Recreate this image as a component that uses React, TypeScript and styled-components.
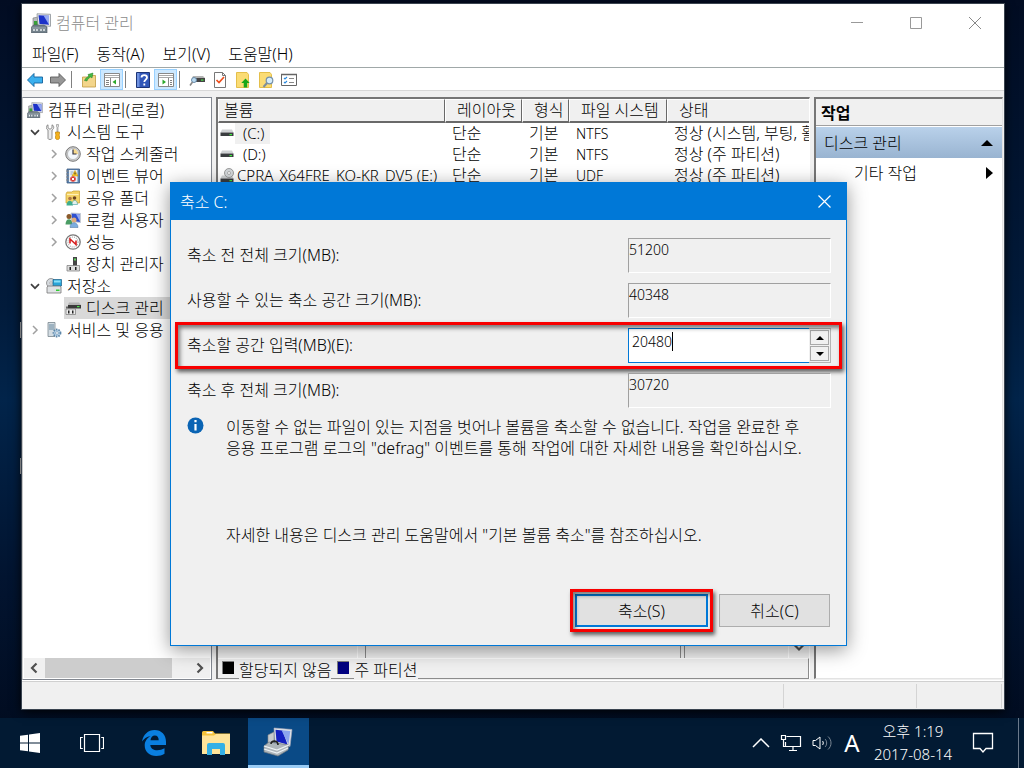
import React from 'react';
import styled, { createGlobalStyle, css } from 'styled-components';

const GlobalStyle = createGlobalStyle`
  *, *::before, *::after { box-sizing: border-box; }
  html, body { margin: 0; padding: 0; }
  body {
    font-family: "Noto Sans", "Noto Sans CJK KR", sans-serif;
    font-size: 16px;
    font-weight: 300;
    line-height: 22px;
    color: #000;
  }
  button, input { font: inherit; color: inherit; margin: 0; }
  button { padding: 0; border: 0; background: none; }
  svg { display: block; flex: none; }
`;

/* ---------- desktop ---------- */

const Desktop = styled.div`
  display: flex;
  flex-direction: column;
  min-height: 100vh;
  overflow: hidden;
  background:
    linear-gradient(#c9ccd0, #c9ccd0) 20px 322px / 2px 16px no-repeat,
    linear-gradient(#c9ccd0, #c9ccd0) 20px 458px / 2px 16px no-repeat,
    linear-gradient(180deg, #020c22 0%, #021b3b 40%, #02244a 52%, #021430 75%, #010a1c 100%);
`;

const Workspace = styled.main`
  flex: 1;
  display: flex;
  padding: 4px 20px 9px 22px;
`;

const Window = styled.section`
  position: relative;
  flex: 1;
  min-width: 0;
  display: flex;
  flex-direction: column;
  background: #f0f0f0;
  box-shadow: 0 0 0 1px #3a4450, 0 2px 10px #000;
`;

const TitleBar = styled.header`
  display: flex;
  align-items: center;
  height: 37px;
  padding-left: 9px;
  background: #fff;
`;

const WindowTitle = styled.h1`
  flex: 1;
  margin: 0 0 0 5px;
  font-size: 16px;
  font-weight: 300;
  line-height: 20px;
  color: #8c8c8c;
`;

const CaptionButton = styled.button`
  display: flex;
  align-items: center;
  justify-content: center;
  width: 59px;
  height: 36px;
`;

const MenuBar = styled.nav`
  display: flex;
  gap: 18px;
  height: 27px;
  padding: 0 10px;
  background: #fff;
  border-bottom: 1px solid #a0a8a8;
`;

const MenuItem = styled.button`
  line-height: 20px;
  white-space: nowrap;
`;

const Toolbar = styled.div`
  display: flex;
  align-items: center;
  height: 23px;
  padding: 1px 0 0 1px;
  background: #fff;
  border-bottom: 1px solid #d8d8d8;
`;

const ToolButton = styled.button<{ $on?: boolean }>`
  display: flex;
  align-items: center;
  justify-content: center;
  width: 23px;
  height: 21px;
  ${p => p.$on && css`
    background: #cce8ff;
    border: 1px solid #99d1ff;
  `}
`;

const ToolSeparator = styled.span`
  width: 1px;
  height: 17px;
  margin: 0 5px 0 2px;
  background: #808080;
`;

const Panes = styled.div`
  flex: 1;
  display: flex;
  gap: 4px;
  min-height: 0;
  padding: 6px 1px 0 0;
`;

/* ---------- tree ---------- */

const TreePane = styled.aside`
  width: 190px;
  display: flex;
  flex-direction: column;
  margin-bottom: 1px;
  background: #fff;
  border: 1px solid #828790;
  border-left-color: #c8c8c8;
`;

const TreeList = styled.ul`
  flex: 1;
  margin: 0;
  padding: 1px 0 0;
  list-style: none;
  overflow: hidden;
`;

const TreeRow = styled.li<{ $level: number }>`
  display: flex;
  align-items: center;
  height: 22px;
  padding-left: ${p => [4, 7, 26][p.$level]}px;
  white-space: nowrap;
`;

const Twisty = styled.span`
  display: flex;
  justify-content: center;
  width: 10px;
  margin-right: 5px;
`;

const TreeLabel = styled.span<{ $selected?: boolean; $root?: boolean }>`
  display: flex;
  align-items: center;
  gap: 5px;
  height: 22px;
  padding-left: ${p => (p.$root ? 0 : 1)}px;
  ${p => p.$selected && css`
    flex: 1;
    background: #d9d9d9;
  `}
`;

const HScroll = styled.div`
  display: flex;
  height: 20px;
  margin: 0 1px 1px;
  background: #f0f0f0;
`;

const ScrollButton = styled.button`
  display: flex;
  align-items: center;
  justify-content: center;
  width: 21px;
`;

const ScrollTrack = styled.div`
  flex: 1;
`;

const ScrollThumb = styled.div`
  width: 88%;
  height: 100%;
  background: #cdcdcd;
`;

/* ---------- volume list ---------- */

const CenterPane = styled.section`
  flex: 1;
  min-width: 0;
  display: flex;
  flex-direction: column;
  margin-bottom: 2px;
  border-top: 2px solid #767676;
  border-left: 2px solid #767676;
  border-right: 1px solid #fff;
`;

const ListArea = styled.div`
  height: 220px;
  overflow: hidden;
  background: #fff;
`;

const VolumeTable = styled.table`
  width: 100%;
  border-collapse: separate;
  border-spacing: 0;
  table-layout: fixed;
`;

const Th = styled.th`
  height: 24px;
  padding: 0 0 0 11px;
  font-weight: 300;
  text-align: left;
  line-height: 21px;
  white-space: nowrap;
  overflow: hidden;
  background: #f0f0f0;
  border-top: 1px solid #fff;
  border-left: 1px solid #fff;
  border-right: 1px solid #696969;
  border-bottom: 2px solid #696969;
  &:first-child { padding-left: 5px; }
  &:last-child { border-right: 0; }
`;

const Td = styled.td<{ $latin?: boolean }>`
  height: 21px;
  padding: 0 0 0 7px;
  font-size: ${p => (p.$latin ? 14 : 16)}px;
  line-height: 21px;
  white-space: nowrap;
  overflow: hidden;
  &:first-child { padding-left: 2px; }
`;

const VolumeName = styled.span`
  display: flex;
  align-items: center;
  gap: 1px;
  height: 21px;
`;

const VolumeText = styled.span<{ $indent?: boolean; $selected?: boolean }>`
  height: 21px;
  padding: 0 6px 0 ${p => (p.$indent ? 8 : 2)}px;
  font-size: 15px;
  background: ${p => (p.$selected ? '#f0f0f0' : 'transparent')};
`;

const DiskMap = styled.div`
  flex: 1;
  display: grid;
  grid-template-columns: 147px 1fr 107px 21px;
  background: #f0f0f0;
`;

const MapHeader = styled.div`
  margin-right: 7px;
  border-right: 1px solid #fff;
`;

const MapRegion = styled.div`
  border: 1px solid #8c8c8c;
  border-width: 0 1px;
`;

const MapTail = styled.div`
  margin-left: 3px;
  border-left: 1px solid #8c8c8c;
`;

const MapScroll = styled.div`
  display: flex;
  align-items: flex-end;
  justify-content: center;
  padding-bottom: 3px;
  border-left: 1px solid #fff;
`;

const Legend = styled.div`
  display: flex;
  align-items: center;
  height: 21px;
  padding-left: 4px;
  border-top: 1px solid #fff;
  border-right: 1px solid #8c8c8c;
  border-bottom: 1px solid #8c8c8c;
`;

const LegendSwatch = styled.span<{ $color: string }>`
  width: 12px;
  height: 13px;
  margin: 0 5px 3px 0;
  background: ${p => p.$color};
  border: 1px solid #808080;
  border-width: 1px 0 0 1px;
`;

const LegendText = styled.span`
  height: 20px;
  margin: 0 6px -2px 0;
  line-height: 21px;
  background: #f0f0f0;
`;

/* ---------- actions ---------- */

const ActionsPane = styled.aside`
  width: 189px;
  display: flex;
  flex-direction: column;
  margin-bottom: 2px;
  background: #fff;
  border-top: 2px solid #767676;
  border-left: 2px solid #767676;
  border-right: 1px solid #e3e3e3;
  border-bottom: 1px solid #e3e3e3;
`;

const ActionsTitle = styled.h2`
  height: 27px;
  margin: 0 0 1px;
  padding-left: 5px;
  font-size: 16px;
  font-weight: 700;
  line-height: 28px;
  background: #f0f0f0;
  border-bottom: 1px solid #a0a0a0;
`;

const ActionsGroup = styled.button`
  display: flex;
  align-items: center;
  justify-content: space-between;
  height: 31px;
  padding: 0 9px 0 8px;
  background: linear-gradient(#b9d1ea, #99b4d1);
`;

const ActionsItem = styled.button`
  display: flex;
  align-items: center;
  justify-content: space-between;
  height: 30px;
  padding: 0 9px 0 38px;
`;

const StatusBar = styled.footer`
  display: grid;
  grid-template-columns: 1fr 133px 85px;
  height: 28px;
  padding: 2px 2px 1px 0;
  border-top: 1px solid #d0d0d0;
  box-shadow: 0 -1px 0 #fff;
`;

const StatusCell = styled.div`
  border-right: 1px solid #d4d4d4;
`;

/* ---------- shrink dialog ---------- */

const Dialog = styled.form`
  position: absolute;
  left: 148px;
  top: 178px;
  width: 677px;
  display: flex;
  flex-direction: column;
  background: #f0f0f0;
  border: 1px solid #0078d7;
  box-shadow: 0 4px 18px rgba(0, 0, 0, 0.42);
`;

const DialogTitle = styled.header`
  display: flex;
  align-items: center;
  justify-content: space-between;
  height: 37px;
  padding: 0 9px;
  color: #fff;
  background: #0078d7;
`;

const DialogClose = styled.button`
  display: flex;
  align-items: center;
  justify-content: center;
  width: 25px;
  height: 25px;
`;

const Fields = styled.div`
  display: flex;
  flex-direction: column;
  gap: 10px;
  padding: 18px 15px 0 16px;
`;

const Field = styled.div`
  position: relative;
  display: flex;
  justify-content: space-between;
  height: 35px;
  line-height: 35px;
`;

const ReadOnlyBox = styled.input`
  width: 203px;
  height: 35px;
  padding: 0 0 13px;
  font-size: 14px;
  background: #f0f0f0;
  border: 1px solid;
  border-color: #a0a0a0 #fff #fff #a0a0a0;
  outline: 0;
`;

const Spinner = styled.div`
  position: relative;
  display: flex;
  width: 203px;
  height: 35px;
`;

const SpinInput = styled.input`
  flex: 1;
  min-width: 0;
  padding: 0 0 9px 3px;
  font-size: 14px;
  background: #fff;
  border: 1px solid #0078d7;
  border-right: 0;
  outline: 0;
`;

const Caret = styled.span`
  position: absolute;
  left: 44px;
  top: 4px;
  width: 1px;
  height: 19px;
  background: #000;
`;

const SpinButtons = styled.div`
  display: flex;
  flex-direction: column;
  gap: 1px;
  width: 22px;
  padding: 1px;
  border: 1px solid #b4b4b4;
  border-left: 0;
`;

const SpinButton = styled.button`
  flex: 1;
  display: flex;
  align-items: center;
  justify-content: center;
  background: #f0f0f0;
  border: 1px solid #a8a8a8;
`;

const Highlight = styled.span<{ $inset: string }>`
  position: absolute;
  inset: ${p => p.$inset};
  border: 3px solid #f80000;
  box-shadow: 2px 3px 4px rgba(0, 0, 0, 0.6), inset 2px 3px 4px rgba(0, 0, 0, 0.5);
  pointer-events: none;
`;

const Notice = styled.div`
  display: flex;
  gap: 22px;
  padding: 9px 15px 0 16px;
`;

const NoticeText = styled.div`
  flex: 1;
  line-height: 21px;
  p { margin: 0 0 66px; white-space: nowrap; }
  p:last-child { margin-bottom: 0; }
`;

const DialogActions = styled.div`
  display: flex;
  justify-content: flex-end;
  gap: 11px;
  padding: 48px 16px 18px;
`;

const ActionSlot = styled.span`
  position: relative;
  display: flex;
`;

const PushButton = styled.button<{ $primary?: boolean }>`
  width: ${p => (p.$primary ? 133 : 111)}px;
  height: 33px;
  line-height: 28px;
  background: #e1e1e1;
  border: ${p => (p.$primary ? '2px solid #0078d7' : '1px solid #adadad')};
`;

/* ---------- taskbar ---------- */

const Taskbar = styled.footer`
  display: flex;
  height: 50px;
  background: #021a33;
  color: #fff;
`;

const TaskButton = styled.button<{ $active?: boolean }>`
  display: flex;
  align-items: center;
  justify-content: center;
  width: 61px;
  margin-right: 1px;
  padding-right: 2px;
  ${p => p.$active && css`
    background: #0a4a86;
    border-bottom: 3px solid #9accf5;
  `}
`;

const Tray = styled.div`
  display: flex;
  align-items: center;
  margin-left: auto;
  gap: 10px;
`;

const TrayButton = styled.button`
  display: flex;
  align-items: center;
  justify-content: center;
`;

const ImeButton = styled(TrayButton)`
  width: 20px;
  font-size: 24px;
  font-weight: 400;
  line-height: 24px;
`;

const Clock = styled.time`
  width: 82px;
  margin-right: 8px;
  font-size: 15px;
  line-height: 23px;
  text-align: center;
  white-space: nowrap;
`;

const ShowDesktop = styled.button`
  width: 6px;
  height: 50px;
  margin-left: 14px;
  border-left: 1px solid #6b7a8c;
`;

/* ---------- icons ---------- */

const ComputerIcon = ({ size = 16 }: { size?: number }) => (
  <svg width={size} height={size} viewBox="0 0 20 20">
    <path d="M2 5l5-1v9H2z" fill="#b8bcc0" stroke="#777" strokeWidth=".6" />
    <path d="M3 8h4v4H3z" fill="#38a038" />
    <path d="M6 .8l13.500.5v12L7 12.500z" fill="#e8eaec" stroke="#8a9096" strokeWidth=".8" />
    <path d="M7.500 2.300l10.500.4v9L8.500 11z" fill="#1c32c8" />
    <path d="M12.500 2.500l5.500.2v9z" fill="#96aaf2" />
    <path d="M.5 14l2-2H13l3 2v6H.5z" fill="#74828c" stroke="#4c565e" strokeWidth=".6" />
    <path d="M1 15h14" stroke="#a9b5bc" strokeWidth=".8" />
    <path d="M3 16v2M6 16v2M10 16v2M13 16v2" stroke="#f0f4f6" strokeWidth="1.400" />
  </svg>
);

const ToolsIcon = () => (
  <svg width="16" height="16" viewBox="0 0 16 16">
    <path d="M2 .8v3l2 1.500 2-1.500v-3c2.300 1 2.300 4 0 5.200v8.500c0 1.300-4 1.300-4 0V6C-.3 4.800-.3 1.800 2 .8z" fill="#ececec" stroke="#777" strokeWidth=".8" />
    <path d="M10.500.5h2v2l-.5 1v4.500h-1V3.500l-.5-1z" fill="#ddd" stroke="#888" strokeWidth=".6" />
    <path d="M9.500 8h4v2l-.5 1 .5 1v2c0 2-4 2-4 0v-2l.5-1-.5-1z" fill="#f6b21c" stroke="#b47800" strokeWidth=".6" />
  </svg>
);

const ClockIcon = () => (
  <svg width="16" height="16" viewBox="0 0 16 16">
    <circle cx="8" cy="8" r="7.300" fill="#cfcfcf" stroke="#777" />
    <circle cx="8" cy="8" r="5.500" fill="#f4f8fc" stroke="#999" strokeWidth=".5" />
    <path d="M8 8V3a5 5 0 0 1 5 5z" fill="#f6d98c" />
    <path d="M8 3.500V8h3.500" fill="none" stroke="#334" strokeWidth="1.200" />
  </svg>
);

const EventIcon = () => (
  <svg width="16" height="16" viewBox="0 0 16 16">
    <path d="M2 1h12.500v14H2z" fill="#5e86b4" stroke="#3d5a80" strokeWidth=".8" />
    <path d="M4 2h8.500v12H4z" fill="#e9eff6" />
    <path d="M1 3h3M1 6h3M1 9h3M1 12h3" stroke="#888" />
    <path d="M5.500 4h3M5.500 6h2" stroke="#8fa6c4" />
    <path d="M10 2.500l3 5.500H7z" fill="#ffce2e" stroke="#b98b00" strokeWidth=".5" />
    <path d="M10 4.500v2" stroke="#222" />
    <circle cx="8" cy="11" r="2.800" fill="#d83a34" />
    <path d="M6.800 9.800l2.400 2.400M9.200 9.800l-2.400 2.400" stroke="#fff" />
  </svg>
);

const SharedFolderIcon = () => (
  <svg width="16" height="16" viewBox="0 0 16 16">
    <path d="M1 4l1-2h5l1-1h6.500v12H1z" fill="#f5d368" stroke="#c79d2c" strokeWidth=".7" />
    <path d="M2 4.500h11.500" stroke="#fff0b8" />
    <circle cx="5" cy="8.500" r="1.800" fill="#b07848" />
    <circle cx="9.500" cy="8" r="1.800" fill="#6b4423" />
    <path d="M1.500 15.500c0-6.500 6.500-6.500 6.500 0z" fill="#3fae8e" />
    <path d="M7 14.500c0-5.500 5.500-5.500 5.500 0z" fill="#e4f0ee" stroke="#3f9f9e" strokeWidth=".6" />
  </svg>
);

const UsersIcon = () => (
  <svg width="16" height="16" viewBox="0 0 16 16">
    <path d="M6 1l9.500.5v9L7 9.500z" fill="#2e50d0" stroke="#c7ccd4" />
    <path d="M11 2l4 .2v7.500z" fill="#93a8f0" />
    <circle cx="4" cy="4.500" r="2.500" fill="#8b5a2b" />
    <path d="M.5 12.500c0-7 7-7 7 0z" fill="#4a9c64" />
    <circle cx="9" cy="8" r="2.500" fill="#e0ac7c" />
    <path d="M5 15.500c0-6.500 8-6.500 8 0z" fill="#7daee0" stroke="#48709c" strokeWidth=".5" />
  </svg>
);

const PerfIcon = () => (
  <svg width="16" height="16" viewBox="0 0 16 16">
    <circle cx="8" cy="8" r="7.200" fill="#fff" stroke="#777" strokeWidth="1.300" />
    <circle cx="8" cy="8" r="5" fill="none" stroke="#aaa" strokeWidth="1.200" strokeDasharray="1 1" />
    <path d="M5 9.500V5l6 5.500V6.500" fill="none" stroke="#d81e1e" strokeWidth="1.600" />
  </svg>
);

const DeviceIcon = () => (
  <svg width="16" height="16" viewBox="0 0 16 16">
    <path d="M8 1h4v9H8z" fill="#444" />
    <path d="M9 2.500h2v2H9z" fill="#5fd35f" />
    <path d="M2 9.500h12.500v5.500H2z" fill="#dcdcdc" stroke="#777" strokeWidth=".7" />
    <path d="M4.500 11H6v3H4.500zM10 11h1.500v3H10z" fill="#222" />
  </svg>
);

const StorageIcon = () => (
  <svg width="16" height="16" viewBox="0 0 16 16">
    <circle cx="5" cy="5" r="4.500" fill="#d6dade" stroke="#777" strokeWidth=".7" />
    <circle cx="5" cy="5" r="1.200" fill="#fff" stroke="#777" strokeWidth=".5" />
    <path d="M7 1.500h8.500v6.500H7z" fill="#28a4d8" stroke="#1a5f86" strokeWidth=".7" />
    <path d="M8 2.500h6.500v2H8z" fill="#8be0f8" />
    <path d="M1 9l1-1h12l1 1v6H1z" fill="#dfe2e4" stroke="#777" strokeWidth=".8" />
    <path d="M10 11.500h3.500v1.500H10z" fill="#3c3" />
  </svg>
);

const DiskMgmtIcon = () => (
  <svg width="16" height="16" viewBox="0 0 16 16">
    <path d="M4 2.500h10l2 2.500H3z" fill="#b4b4b4" />
    <path d="M3 5h13v3.500H3z" fill="#3a3a3a" />
    <path d="M12 6h2.500v1.200H12z" fill="#4de04d" />
    <path d="M1 6.500h2v2H1z" fill="#666" />
    <path d="M1 9h9.500v5.500H1z" fill="#ececec" stroke="#777" strokeWidth=".7" />
    <path d="M3 10.500h1.500v3H3zM7 10.500h1.500v3H7z" fill="#222" />
  </svg>
);

const ServicesIcon = () => (
  <svg width="16" height="16" viewBox="0 0 16 16">
    <path d="M2 .5h7v14H2z" fill="#d3dce2" stroke="#78868f" strokeWidth=".8" />
    <path d="M3 3h5M3 5h5M3 7h5" stroke="#5b7f98" strokeWidth=".9" />
    <circle cx="11" cy="11" r="3.500" fill="#b8d4ea" stroke="#5c86a8" strokeWidth="1.800" strokeDasharray="1.500 1" />
    <circle cx="11" cy="11" r="1.400" fill="#fff" stroke="#5c86a8" strokeWidth=".6" />
  </svg>
);

const Chevron = ({ dir }: { dir: 'right' | 'down' }) => (
  <svg width="10" height="10" viewBox="0 0 10 10" fill="none">
    {dir === 'right'
      ? <path d="M3 1l4 4-4 4" stroke="#a0a0a0" strokeWidth="1.500" />
      : <path d="M1 3.200l4 4 4-4" stroke="#404040" strokeWidth="1.700" />}
  </svg>
);

const ScrollArrow = ({ d }: { d: string }) => (
  <svg width="12" height="12" viewBox="0 0 12 12" fill="none">
    <path d={d} stroke="#505050" strokeWidth="2.200" />
  </svg>
);

const Arrow = ({ flip }: { flip?: boolean }) => (
  <svg width="16" height="16" viewBox="0 0 16 16">
    {flip
      ? <path d="M15.500 8L9 1.500V5H.5v6H9v3.500z" fill="#979797" stroke="#5c5c5c" strokeWidth=".9" />
      : <path d="M.5 8L7 1.500V5h8.500v6H7v3.500z" fill="#3bb0ee" stroke="#14629c" strokeWidth=".9" />}
  </svg>
);

const FolderUpIcon = () => (
  <svg width="16" height="16" viewBox="0 0 16 16">
    <path d="M1.500 5H7l1-1.500h6.500V15h-13z" fill="#f3d58a" stroke="#c09a40" strokeWidth=".8" />
    <path d="M3.500 8.500C4.500 6 6 5 8 4.500L7 2.500 12 1l-1 5-1.300-1C8 6 6.500 7 6 9z" fill="#43b843" stroke="#237a23" strokeWidth=".5" />
  </svg>
);

const PaneIcon = ({ right }: { right?: boolean }) => (
  <svg width="16" height="14" viewBox="0 0 16 14">
    <path d="M.5.5h15v13H.5z" fill="#fff" stroke="#888" />
    <path d="M1 2.500h14M1 4.500h14" stroke="#a8a8a8" />
    <path d={right ? 'M10.500 5v8' : 'M6.500 5v8'} stroke="#888" />
    <path d={right ? 'M12 7.500h2M12 9.500h2M12 11.500h2' : 'M2 7.500h3M2 9.500h3M2 11.500h3'} stroke="#808080" />
    <path d={right ? 'M4.500 6.500L8 9l-3.500 2.500z' : 'M12 6.500L8.500 9l3.500 2.500z'} fill="#2ca82c" />
  </svg>
);

const HelpIcon = () => (
  <svg width="14" height="16" viewBox="0 0 14 16">
    <path d="M.5.5h13v15H.5z" fill="#3157b8" stroke="#1d3577" />
    <path d="M1 1h2.500v14H1z" fill="#6f92e0" />
    <path d="M5.500 5.500c0-3.200 5.500-3.200 5.500 0 0 2-2.700 2.200-2.700 4.500M8.300 11.500v2" fill="none" stroke="#fff" strokeWidth="1.800" />
  </svg>
);

const ConnectIcon = () => (
  <svg width="16" height="16" viewBox="0 0 16 16">
    <path d="M4 4h10l2 2H3z" fill="#b4b4b4" />
    <path d="M3 6h13v4H3z" fill="#444" />
    <path d="M12 7.500h2.500v1.200H12z" fill="#4de04d" />
    <circle cx="5" cy="8" r="2.500" fill="#bcdcf2" stroke="#6a8cab" />
    <path d="M3.500 10L1 13.500" stroke="#888" strokeWidth="1.600" />
  </svg>
);

const CheckDocIcon = () => (
  <svg width="14" height="16" viewBox="0 0 14 16">
    <path d="M1.500.5h8l3 3v12h-11z" fill="#fff" stroke="#777" />
    <path d="M9.500.5v3h3" fill="none" stroke="#777" />
    <path d="M3.500 8l2.500 2.500 5-5.500" fill="none" stroke="#ee4e1c" strokeWidth="1.700" />
  </svg>
);

const NoteUpIcon = () => (
  <svg width="14" height="16" viewBox="0 0 14 16">
    <path d="M.5.5h10.500l1.500 2v13H.5z" fill="#fbdc74" stroke="#e4bf4a" />
    <path d="M9.500 6.500l4.200 4.500h-2.500v4.500H7.700V11H5.300z" fill="#19a619" />
  </svg>
);

const NoteSearchIcon = () => (
  <svg width="16" height="16" viewBox="0 0 16 16">
    <path d="M1.500.5H12l1.500 2v13h-12z" fill="#fbdc74" stroke="#e4bf4a" />
    <circle cx="11.500" cy="8.500" r="3.300" fill="#d4ecfa" stroke="#7590a8" strokeWidth="1.200" />
    <path d="M9 11l-3.500 4" stroke="#7f8f9c" strokeWidth="2" />
  </svg>
);

const ListIcon = () => (
  <svg width="16" height="14" viewBox="0 0 16 14">
    <path d="M.5 1.500h15v11H.5z" fill="#fff" stroke="#666" />
    <path d="M0 1.500h16" stroke="#666" strokeWidth="1.500" />
    <path d="M3 5l1 1 2-2M3 9l1 1 2-2" fill="none" stroke="#2a8adf" strokeWidth="1.100" />
    <path d="M8 5.500h5M8 9.500h5" stroke="#888" />
  </svg>
);

const DriveIcon = ({ optical }: { optical?: boolean }) => (
  <svg width="14" height="16" viewBox="0 0 14 16">
    <g transform={optical ? 'translate(0 4)' : undefined}>
      <path d="M2 3.500h10l1.500 3H.5z" fill="#cfd2d4" />
      <path d="M.5 6.500h13v3.500H.5z" fill="#3a3d40" />
      <path d="M9.500 8h2.500v1.200H9.500z" fill="#3df03d" />
    </g>
    {optical && <circle cx="9" cy="5" r="4.500" fill="#d3d7da" stroke="#888" strokeWidth=".8" />}
    {optical && <circle cx="9" cy="5" r="1.500" fill="#fff" stroke="#888" strokeWidth=".6" />}
  </svg>
);

const Triangle = ({ d, w, h }: { d: string; w: number; h: number }) => (
  <svg width={w} height={h} viewBox={`0 0 ${w} ${h}`}><path d={d} fill="#000" /></svg>
);

const InfoIcon = () => (
  <svg width="17" height="17" viewBox="0 0 17 17">
    <circle cx="8.500" cy="8.500" r="8" fill="#0a64b4" />
    <path d="M8.500 3v2.200M8.500 7v6.500" stroke="#fff" strokeWidth="2.200" />
  </svg>
);

const StartIcon = () => (
  <svg width="20" height="20" viewBox="0 0 20 20" fill="#fff">
    <path d="M0 2.800L8 1.700v7.800H0zM9 1.500L20 0v9.500H9zM0 10.500h8v7.800l-8-1.100zM9 10.500h11V20L9 18.500z" />
  </svg>
);

const TaskViewIcon = () => (
  <svg width="24" height="18" viewBox="0 0 24 18" fill="none" stroke="#fff">
    <path d="M4.500.5h15v17h-15zM2.800 3.500H.5v11h2.300M21.200 3.500h2.300v11h-2.300" strokeWidth="1.200" />
  </svg>
);

const EdgeIcon = () => (
  <svg width="24" height="26" viewBox="0 0 24 26">
    <path
      d="M0 11.500C1.300 4.500 6 0 12.500 0 19.500 0 24 4.800 24 11.800v3.100H8.300c.3 3.500 3.300 5.300 7 5.300 2.700 0 5-.7 7.200-2v5.600C20.200 25.200 17.400 26 14.300 26 7.400 26 2.700 21.800 2.700 15.500c0-4.200 2.300-7.700 6-9.600C4.600 6.500 1.700 8.800 0 11.500zM8.500 10.300h8.200c0-3-1.400-4.800-3.800-4.800-2.500 0-4 2-4.400 4.800z"
      fill="#0a7fe0"
      fillRule="evenodd"
    />
  </svg>
);

const ExplorerIcon = () => (
  <svg width="28" height="24" viewBox="0 0 28 24">
    <path d="M0 1.500A1.500 1.500 0 0 1 1.500 0H11l2 2.500h15V23H0z" fill="#f5c33b" />
    <path d="M4.500 1h6v1.500h-6z" fill="#fff" />
    <path d="M0 4.500h12l2-1.500h14v20H0z" fill="#ffe49a" />
    <path d="M5 24V14a2 2 0 0 1 2-2h14a2 2 0 0 1 2 2v10h-5v-6h-8v6z" fill="#35b0e6" />
  </svg>
);

const ManagementIcon = () => (
  <svg width="30" height="30" viewBox="0 0 30 30">
    <path d="M5 8l6-3v12H5z" fill="#c7cbce" stroke="#888" strokeWidth=".6" />
    <path d="M11 1l18 1.500-2 17-15-4z" fill="#dfe3e6" stroke="#aab" strokeWidth=".6" />
    <path d="M12.500 2.800l7 .6 5 14.200-11-3z" fill="#1420c0" />
    <path d="M18.500 3.300l8.800.8-1.800 13.500z" fill="#8ba4ee" />
    <path d="M1 19l5-4 20 3-1 5-10 6-14-4z" fill="#aeb6bb" stroke="#70797f" strokeWidth=".7" />
    <path d="M1 19l13 4 12-5M1 22l13 4 11-5" fill="none" stroke="#edf2f4" strokeWidth="1.200" />
    <path d="M8 17c0-4 7-4 7 1" fill="none" stroke="#222" strokeWidth="1.600" />
  </svg>
);

/* ---------- data ---------- */

type TreeNode = {
  level: number;
  label: string;
  icon: React.ReactNode;
  state?: 'right' | 'down';
  selected?: boolean;
};

const tree: TreeNode[] = [
  { level: 0, label: '컴퓨터 관리(로컬)', icon: <ComputerIcon /> },
  { level: 1, label: '시스템 도구', icon: <ToolsIcon />, state: 'down' },
  { level: 2, label: '작업 스케줄러', icon: <ClockIcon />, state: 'right' },
  { level: 2, label: '이벤트 뷰어', icon: <EventIcon />, state: 'right' },
  { level: 2, label: '공유 폴더', icon: <SharedFolderIcon />, state: 'right' },
  { level: 2, label: '로컬 사용자', icon: <UsersIcon />, state: 'right' },
  { level: 2, label: '성능', icon: <PerfIcon />, state: 'right' },
  { level: 2, label: '장치 관리자', icon: <DeviceIcon /> },
  { level: 1, label: '저장소', icon: <StorageIcon />, state: 'down' },
  { level: 2, label: '디스크 관리', icon: <DiskMgmtIcon />, selected: true },
  { level: 1, label: '서비스 및 응용', icon: <ServicesIcon />, state: 'right' },
];

const volumes = [
  { name: '(C:)', fs: 'NTFS', status: '정상 (시스템, 부팅, 활성)', indent: true, selected: true },
  { name: '(D:)', fs: 'NTFS', status: '정상 (주 파티션)', indent: true },
  { name: 'CPRA_X64FRE_KO-KR_DV5 (E:)', fs: 'UDF', status: '정상 (주 파티션)', optical: true },
];

export default function App() {
  return (
    <Desktop>
      <GlobalStyle />
      <Workspace>
        <Window aria-label="컴퓨터 관리">
          <TitleBar>
            <ComputerIcon size={20} />
            <WindowTitle>컴퓨터 관리</WindowTitle>
            <CaptionButton aria-label="최소화">
              <svg width="12" height="12"><path d="M0 5.500h12" stroke="#999" /></svg>
            </CaptionButton>
            <CaptionButton aria-label="최대화">
              <svg width="12" height="12"><path d="M.5.5h11v11H.5z" fill="none" stroke="#999" /></svg>
            </CaptionButton>
            <CaptionButton aria-label="닫기">
              <svg width="12" height="12"><path d="M0 0l12 12M12 0L0 12" stroke="#888" /></svg>
            </CaptionButton>
          </TitleBar>
          <MenuBar>
            <MenuItem>파일(F)</MenuItem>
            <MenuItem>동작(A)</MenuItem>
            <MenuItem>보기(V)</MenuItem>
            <MenuItem>도움말(H)</MenuItem>
          </MenuBar>
          <Toolbar role="toolbar">
            <ToolButton aria-label="뒤로"><Arrow /></ToolButton>
            <ToolButton aria-label="앞으로"><Arrow flip /></ToolButton>
            <ToolSeparator />
            <ToolButton aria-label="위로"><FolderUpIcon /></ToolButton>
            <ToolButton $on aria-label="콘솔 트리"><PaneIcon /></ToolButton>
            <ToolSeparator />
            <ToolButton aria-label="도움말"><HelpIcon /></ToolButton>
            <ToolButton $on aria-label="작업 창"><PaneIcon right /></ToolButton>
            <ToolSeparator />
            <ToolButton aria-label="연결"><ConnectIcon /></ToolButton>
            <ToolButton aria-label="확인"><CheckDocIcon /></ToolButton>
            <ToolButton aria-label="올리기"><NoteUpIcon /></ToolButton>
            <ToolButton aria-label="찾기"><NoteSearchIcon /></ToolButton>
            <ToolButton aria-label="목록"><ListIcon /></ToolButton>
          </Toolbar>
          <Panes>
            <TreePane>
              <TreeList>
                {tree.map(n => (
                  <TreeRow key={n.label} $level={n.level}>
                    {n.level > 0 && <Twisty>{n.state && <Chevron dir={n.state} />}</Twisty>}
                    <TreeLabel $root={n.level === 0} $selected={n.selected}>
                      {n.icon}
                      {n.label}
                    </TreeLabel>
                  </TreeRow>
                ))}
              </TreeList>
              <HScroll>
                <ScrollButton aria-label="왼쪽"><ScrollArrow d="M7.500 1.500L3 6l4.500 4.500" /></ScrollButton>
                <ScrollTrack><ScrollThumb /></ScrollTrack>
                <ScrollButton aria-label="오른쪽"><ScrollArrow d="M3.500 1.500L8 6l-4.500 4.500" /></ScrollButton>
              </HScroll>
            </TreePane>

            <CenterPane>
              <ListArea>
                <VolumeTable>
                  <colgroup>
                    <col style={{ width: 227 }} />
                    <col style={{ width: 77 }} />
                    <col style={{ width: 47 }} />
                    <col style={{ width: 98 }} />
                    <col />
                  </colgroup>
                  <thead>
                    <tr>
                      <Th>볼륨</Th>
                      <Th>레이아웃</Th>
                      <Th>형식</Th>
                      <Th>파일 시스템</Th>
                      <Th>상태</Th>
                    </tr>
                  </thead>
                  <tbody>
                    {volumes.map(v => (
                      <tr key={v.name}>
                        <Td>
                          <VolumeName>
                            <DriveIcon optical={v.optical} />
                            <VolumeText $indent={v.indent} $selected={v.selected}>{v.name}</VolumeText>
                          </VolumeName>
                        </Td>
                        <Td>단순</Td>
                        <Td>기본</Td>
                        <Td $latin>{v.fs}</Td>
                        <Td>{v.status}</Td>
                      </tr>
                    ))}
                  </tbody>
                </VolumeTable>
              </ListArea>
              <DiskMap>
                <MapHeader />
                <MapRegion />
                <MapTail />
                <MapScroll><ScrollArrow d="M1.500 2L6 6.500 10.500 2" /></MapScroll>
              </DiskMap>
              <Legend>
                <LegendSwatch $color="#000" />
                <LegendText>할당되지 않음</LegendText>
                <LegendSwatch $color="#000080" />
                <LegendText>주 파티션</LegendText>
              </Legend>
            </CenterPane>

            <ActionsPane>
              <ActionsTitle>작업</ActionsTitle>
              <ActionsGroup>
                디스크 관리
                <Triangle w={12} h={6} d="M6 0l6 6H0z" />
              </ActionsGroup>
              <ActionsItem>
                기타 작업
                <Triangle w={7} h={12} d="M0 0l7 6-7 6z" />
              </ActionsItem>
            </ActionsPane>
          </Panes>
          <StatusBar>
            <StatusCell />
            <StatusCell />
            <StatusCell />
          </StatusBar>

          <Dialog role="dialog" aria-label="축소 C:" onSubmit={e => e.preventDefault()}>
            <DialogTitle>
              축소 C:
              <DialogClose type="button" aria-label="닫기">
                <svg width="13" height="13"><path d="M.5.5l12 12M12.500.5l-12 12" stroke="#fff" strokeWidth="1.200" /></svg>
              </DialogClose>
            </DialogTitle>
            <Fields>
              <Field>
                <label htmlFor="before">축소 전 전체 크기(MB):</label>
                <ReadOnlyBox id="before" readOnly value="51200" />
              </Field>
              <Field>
                <label htmlFor="available">사용할 수 있는 축소 공간 크기(MB):</label>
                <ReadOnlyBox id="available" readOnly value="40348" />
              </Field>
              <Field>
                <label htmlFor="amount">축소할 공간 입력(MB)(E):</label>
                <Spinner>
                  <SpinInput id="amount" defaultValue="20480" />
                  <Caret />
                  <SpinButtons>
                    <SpinButton type="button" aria-label="늘리기"><Triangle w={8} h={4} d="M4 0l4 4H0z" /></SpinButton>
                    <SpinButton type="button" aria-label="줄이기"><Triangle w={8} h={4} d="M0 0h8L4 4z" /></SpinButton>
                  </SpinButtons>
                </Spinner>
                <Highlight $inset="-6px -11px -6px -12px" />
              </Field>
              <Field>
                <label htmlFor="after">축소 후 전체 크기(MB):</label>
                <ReadOnlyBox id="after" readOnly value="30720" />
              </Field>
            </Fields>
            <Notice>
              <InfoIcon />
              <NoticeText>
                <p>
                  이동할 수 없는 파일이 있는 지점을 벗어나 볼륨을 축소할 수 없습니다. 작업을 완료한 후<br />
                  응용 프로그램 로그의 "defrag" 이벤트를 통해 작업에 대한 자세한 내용을 확인하십시오.
                </p>
                <p>자세한 내용은 디스크 관리 도움말에서 "기본 볼륨 축소"를 참조하십시오.</p>
              </NoticeText>
            </Notice>
            <DialogActions>
              <ActionSlot>
                <PushButton $primary type="submit">축소(S)</PushButton>
                <Highlight $inset="-5px" />
              </ActionSlot>
              <PushButton type="button">취소(C)</PushButton>
            </DialogActions>
          </Dialog>
        </Window>
      </Workspace>

      <Taskbar>
        <TaskButton aria-label="시작"><StartIcon /></TaskButton>
        <TaskButton aria-label="작업 보기"><TaskViewIcon /></TaskButton>
        <TaskButton aria-label="Edge"><EdgeIcon /></TaskButton>
        <TaskButton aria-label="파일 탐색기"><ExplorerIcon /></TaskButton>
        <TaskButton $active aria-label="컴퓨터 관리"><ManagementIcon /></TaskButton>
        <Tray>
          <TrayButton aria-label="숨겨진 아이콘">
            <svg width="18" height="10" fill="none" stroke="#fff" strokeWidth="1.500"><path d="M1 9l8-8 8 8" /></svg>
          </TrayButton>
          <TrayButton aria-label="네트워크">
            <svg width="22" height="18" fill="none" stroke="#fff">
              <path d="M6.500 2.500h14v10h-15V8M9 16.500h8M13 12.500v4M1.500 1.500h4v4h-4zM3.500 5.500v7h2" strokeWidth="1.200" />
            </svg>
          </TrayButton>
          <TrayButton aria-label="볼륨">
            <svg width="20" height="18" fill="none" stroke="#fff">
              <path d="M1 6.500h2.500L8 3v12l-4.500-3.500H1z" />
              <path d="M10.500 7c1 1 1 3 0 4" />
              <path d="M13 5c2.200 2 2.200 6 0 8M16 2.500c4 3.500 4 9.500 0 13" stroke="#7b8794" />
            </svg>
          </TrayButton>
          <ImeButton>A</ImeButton>
          <Clock>오후 1:19<br />2017-08-14</Clock>
          <TrayButton aria-label="알림 센터">
            <svg width="22" height="22" fill="none" stroke="#fff" strokeWidth="1.300">
              <path d="M1.500 1.500h19v15H14l-3 3.500-3-3.500H1.500z" />
            </svg>
          </TrayButton>
          <ShowDesktop aria-label="바탕 화면 보기" />
        </Tray>
      </Taskbar>
    </Desktop>
  );
}
